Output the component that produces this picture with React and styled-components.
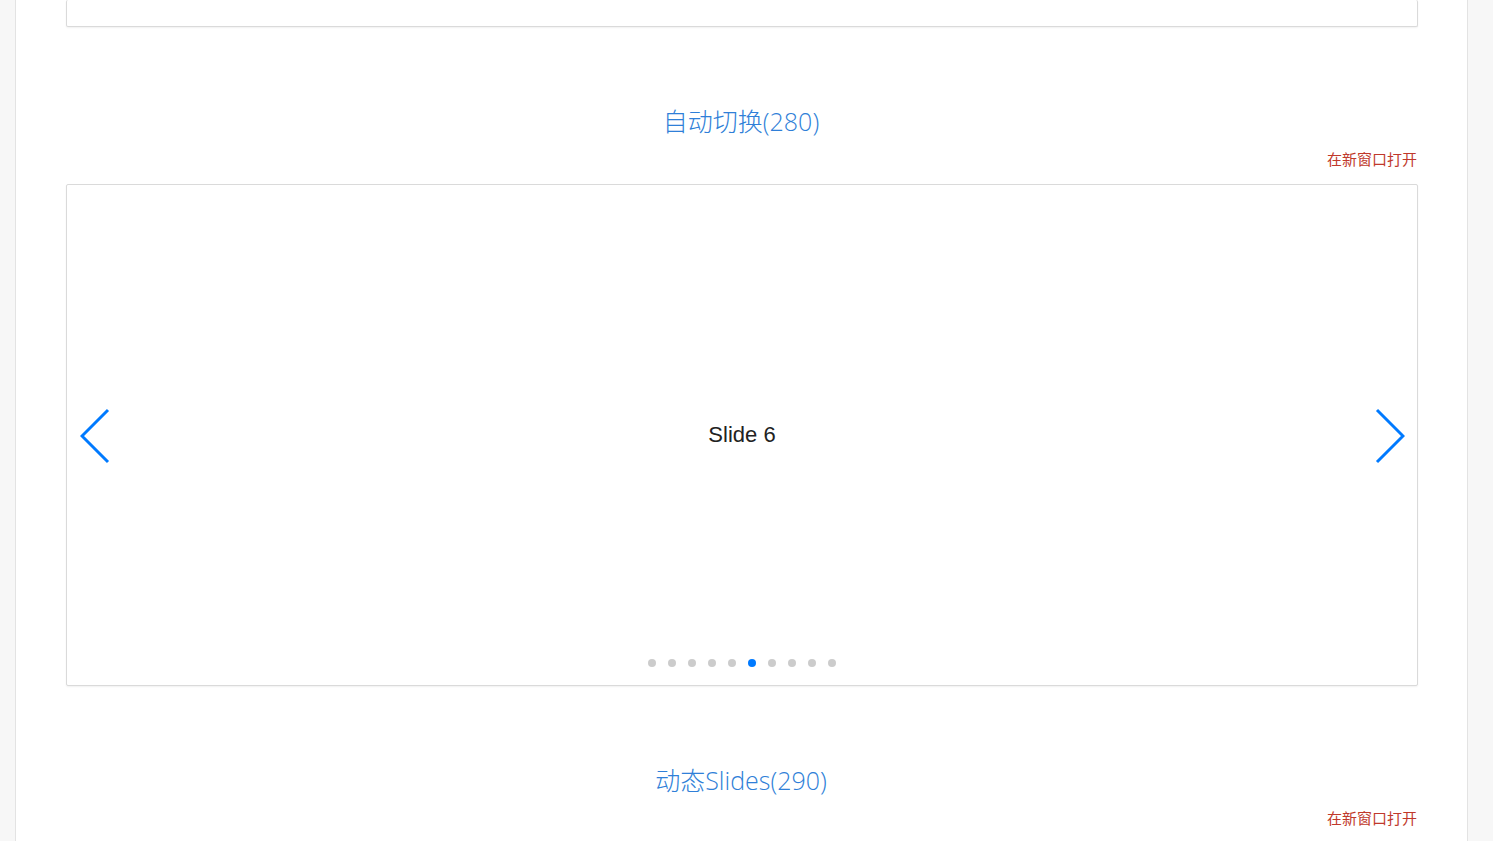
import React from 'react';
import styled, { createGlobalStyle } from 'styled-components';

const GlobalStyle = createGlobalStyle`
  html, body {
    margin: 0;
    padding: 0;
    background: #f7f7f7;
    overflow: hidden;
  }
`;

const Page = styled.div`
  margin-left: 15px;
  width: 1453px;
  min-height: 841px;
  background: #fff;
  border-left: 1px solid #e3e3e3;
  border-right: 1px solid #e3e3e3;
  padding: 0 49px 0 50px;
  box-sizing: border-box;
`;

const Frame = styled.div`
  position: relative;
  box-sizing: border-box;
  border: 1px solid #dadada;
  border-top: ${p => (p.$cut ? 'none' : '1px solid #dadada')};
  height: ${p => p.$height}px;
  border-radius: 2px;
  box-shadow: 0 1px 2px rgba(0, 0, 0, 0.06);
  background: #fff;
`;

const Section = styled.section`
  padding-top: 76px;
`;

const Title = styled.h3`
  margin: 0 0 0 -2px;
  text-align: center;
  font-family: 'Open Sans', 'Noto Sans CJK SC', sans-serif;
  font-weight: 300;
  font-size: 25px;
  line-height: 36px;
  color: #2f7fd8;
`;

const OpenLink = styled.div`
  margin-top: 10px;
  margin-bottom: 15px;
  text-align: right;
  padding-right: 1px;
  font-family: 'Noto Sans CJK SC', sans-serif;
  font-size: 15px;
  line-height: 20px;
  color: #c0392b;
`;

const SlideText = styled.div`
  display: flex;
  align-items: center;
  justify-content: center;
  height: 100%;
  font-family: 'Liberation Sans', Arial, sans-serif;
  font-size: 22px;
  color: #222;
`;

const Arrow = styled.div`
  position: absolute;
  top: 223px;
  ${p => (p.$side === 'left' ? 'left: 13px;' : 'right: 12px;')}
  width: 30px;
  height: 56px;
  cursor: pointer;
`;

const Dots = styled.div`
  position: absolute;
  left: 0;
  right: 0;
  bottom: 18px;
  display: flex;
  justify-content: center;
  gap: 12px;
`;

const Dot = styled.span`
  width: 8px;
  height: 8px;
  border-radius: 50%;
  background: ${p => (p.$active ? '#007aff' : '#cccccc')};
`;

const Chevron = ({ side }) => (
  <Arrow $side={side}>
    <svg width="30" height="56" viewBox="0 0 30 56" fill="none">
      <path
        d={side === 'left' ? 'M28 2 L2 28 L28 54' : 'M2 2 L28 28 L2 54'}
        stroke="#007aff"
        strokeWidth="3"
      />
    </svg>
  </Arrow>
);

export default function App() {
  const active = 5;
  return (
    <>
      <GlobalStyle />
      <Page>
        <Frame $cut $height={27} />
        <Section>
          <Title>自动切换(280)</Title>
          <OpenLink>在新窗口打开</OpenLink>
          <Frame $height={502}>
            <SlideText>Slide 6</SlideText>
            <Chevron side="left" />
            <Chevron side="right" />
            <Dots>
              {Array.from({ length: 10 }).map((_, i) => (
                <Dot key={i} $active={i === active} />
              ))}
            </Dots>
          </Frame>
        </Section>
        <Section>
          <Title>动态Slides(290)</Title>
          <OpenLink>在新窗口打开</OpenLink>
        </Section>
      </Page>
    </>
  );
}
